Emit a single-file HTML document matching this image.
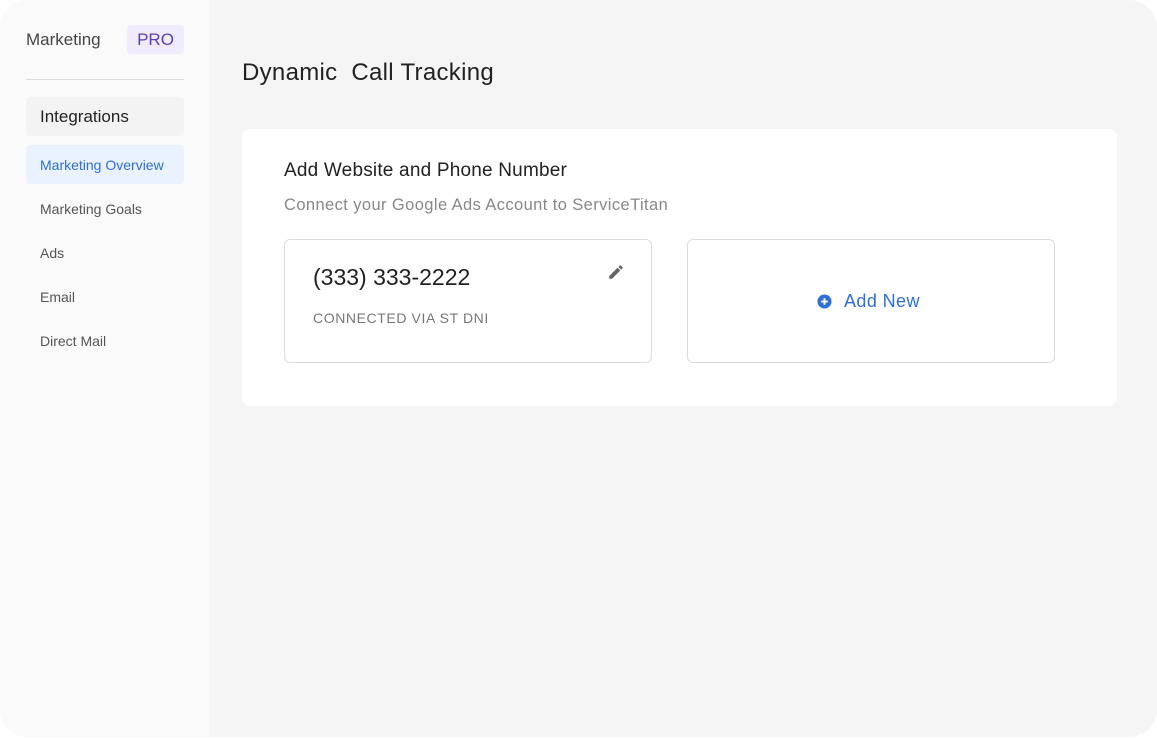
<!DOCTYPE html>
<html><head><style>
body{margin:0;background:#fff;font-family:"Liberation Sans",sans-serif;}
.app{position:absolute;left:0;top:0;width:1157px;height:737px;border-radius:28px;overflow:hidden;background:#f5f5f5;}
.side{position:absolute;left:0;top:0;width:209px;height:100%;background:#fafafa;}
.t{position:absolute;white-space:nowrap;}
.card{position:absolute;left:242px;top:129px;width:875px;height:277px;background:#fff;border-radius:8px;}
.box{position:absolute;top:239px;width:366px;height:122px;border:1px solid #dcdcdc;border-radius:6px;background:#fff;}
</style></head><body>
<div class="app">
<div class="side">
<div class="t" style="left:26px;top:30px;font-size:17px;color:#444">Marketing</div>
<div style="position:absolute;left:127px;top:25px;width:57px;height:29px;background:#f1ecfd;border-radius:4px;color:#5a3fb8;font-size:17px;line-height:29px;text-align:center">PRO</div>
<div style="position:absolute;left:26px;top:79px;width:158px;height:1px;background:#ddd"></div>
<div style="position:absolute;left:26px;top:97px;width:158px;height:39px;background:#f3f3f3;border-radius:4px"></div>
<div class="t" style="left:40px;top:107px;font-size:17px;color:#222">Integrations</div>
<div style="position:absolute;left:26px;top:145px;width:158px;height:39px;background:#e9f2fd;border-radius:4px"></div>
<div class="t" style="left:40px;top:157px;font-size:14px;color:#2f6fd8">Marketing Overview</div>
<div class="t" style="left:40px;top:201px;font-size:14px;color:#555">Marketing Goals</div>
<div class="t" style="left:40px;top:245px;font-size:14px;color:#555">Ads</div>
<div class="t" style="left:40px;top:289px;font-size:14px;color:#555">Email</div>
<div class="t" style="left:40px;top:333px;font-size:14px;color:#555">Direct Mail</div>
</div>
<div class="t" style="left:242px;top:59px;font-size:24px;color:#222;letter-spacing:.3px">Dynamic&nbsp; Call Tracking</div>
<div class="card"></div>
<div class="t" style="left:284px;top:160px;font-size:19px;color:#222;letter-spacing:.2px">Add Website and Phone Number</div>
<div class="t" style="left:284px;top:196px;font-size:16.5px;color:#888;letter-spacing:.4px">Connect your Google Ads Account to ServiceTitan</div>
<div class="box" style="left:284px"></div>
<div class="t" style="left:313px;top:264px;font-size:23px;color:#222">(333) 333-2222</div>
<div class="t" style="left:313px;top:310px;font-size:14px;color:#777;letter-spacing:.6px">CONNECTED VIA ST DNI</div>
<svg style="position:absolute;left:607px;top:263px" width="18" height="18" viewBox="0 0 24 24"><path fill="#666" d="M3 17.25V21h3.75L17.81 9.94l-3.75-3.75L3 17.25zM20.71 7.04a1 1 0 000-1.41l-2.34-2.34a1 1 0 00-1.41 0l-1.83 1.83 3.75 3.75 1.83-1.83z"/></svg>
<div class="box" style="left:687px"></div>
<svg style="position:absolute;left:817px;top:294px" width="15" height="15" viewBox="0 0 16 16"><circle cx="8" cy="8" r="7.5" fill="#2f6fd8"/><path d="M8 4.5v7M4.5 8h7" stroke="#fff" stroke-width="2"/></svg>
<div class="t" style="left:844px;top:291px;font-size:18px;color:#2f6fd8;letter-spacing:.4px">Add New</div>
</div>
</body></html>
